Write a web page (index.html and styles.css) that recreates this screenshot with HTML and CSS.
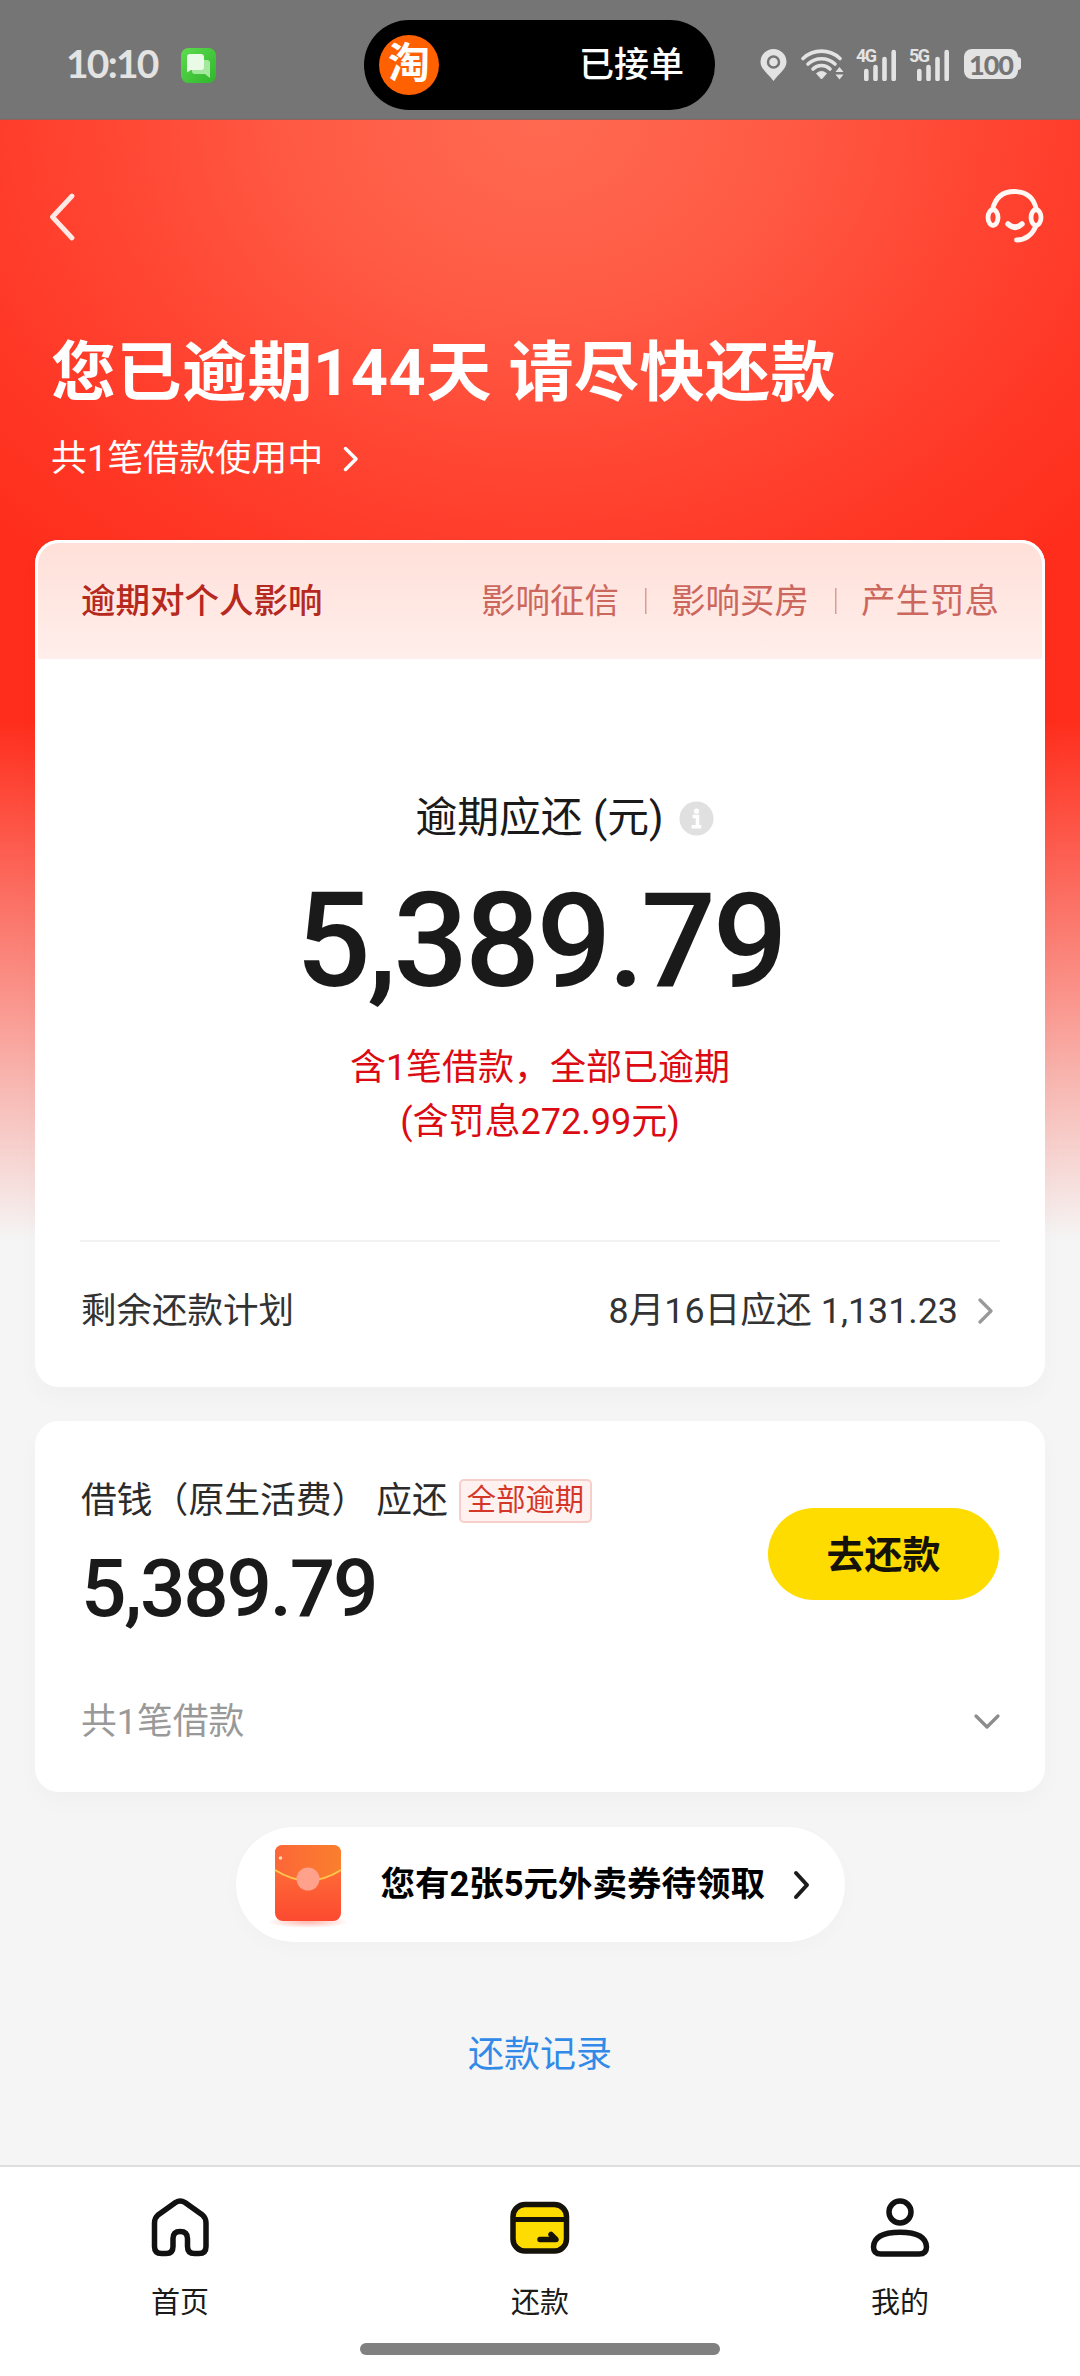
FILE: index.html
```html
<!DOCTYPE html>
<html lang="zh-CN">
<head>
<meta charset="utf-8">
<title>还款</title>
<link rel="stylesheet" href="styles.css">
</head>
<body>
<div class="screen">
  <header class="status">
    <div class="status-left">
      <span class="clock">10:10</span>
      <svg class="msg" viewBox="0 0 35 35"><defs><linearGradient id="mg" x1="0" y1="0" x2="1" y2="1"><stop offset="0" stop-color="#5ddc4e"/><stop offset="1" stop-color="#2fb52c"/></linearGradient></defs><rect width="35" height="35" rx="7.500" fill="url(#mg)"/><path d="M14 12h12q3 0 3 3v15l-5-4H14q-3 0-3-3v-8q0-3 3-3z" fill="#a4e89d"/><path d="M9 6h11q3 0 3 3v10q0 3-3 3H10l-4 2.500V9q0-3 3-3z" fill="#e9fbe7"/></svg>
    </div>
    <div class="island"><span class="tao">淘</span><span class="island-text">已接单</span></div>
    <div class="status-right">
      <svg class="pin" viewBox="0 0 26 32"><path d="M13 0a13 13 0 0 1 13 13c0 7-8 12-13 19C8 25 0 20 0 13A13 13 0 0 1 13 0z" fill="#e3e3e3"/><circle cx="13" cy="13" r="5.500" fill="none" stroke="#757575" stroke-width="2.500"/></svg>
      <svg class="wifi" viewBox="0 0 43 32"><g fill="none" stroke="#e3e3e3" stroke-width="3.600" stroke-linecap="round"><path d="M2 10.500a27 27 0 0 1 37 0"/><path d="M7 16a20 20 0 0 1 27 0"/><path d="M12 21a12 12 0 0 1 17 0"/></g><path d="M15.500 25.500q5-4 10 0L20.500 31z" fill="#e3e3e3" stroke="#e3e3e3" stroke-linejoin="round"/><path d="M34.500 24l4-5 4 5zM34.500 26.500h8l-4 5z" fill="#e3e3e3"/></svg>
      <div class="signal"><span class="gen">4G</span><svg viewBox="0 0 42 32"><path d="M10.300 22v8M19.500 18v12M28.500 10v20M37.700 3v27" stroke="#e3e3e3" stroke-width="4.600" stroke-linecap="round" fill="none"/></svg></div>
      <div class="signal second"><span class="gen">5G</span><svg viewBox="0 0 42 32"><path d="M10.300 22v8M19.500 18v12M28.500 10v20M37.700 3v27" stroke="#e3e3e3" stroke-width="4.600" stroke-linecap="round" fill="none"/></svg></div>
      <div class="battery"><span>100</span></div>
    </div>
  </header>

  <main class="content">
    <nav class="topnav">
      <svg class="back" viewBox="0 0 28 50"><path d="M24 5L4.500 26 24 47" fill="none" stroke="#ffe9e4" stroke-width="4.800" stroke-linecap="round" stroke-linejoin="round"/></svg>
      <svg class="headset" viewBox="0 0 60 56"><g fill="none" stroke="#fff7f4" stroke-width="4.800" stroke-linecap="round"><path d="M8.500 22C11 9.500 19 3.500 30.500 3.500S50 9.500 52.500 22"/><ellipse cx="9" cy="29.500" rx="5" ry="7.800"/><ellipse cx="52" cy="29.500" rx="5" ry="7.800"/><path d="M52 38C48 47 41 52 32.500 52"/><path d="M24 36q7 6.500 14 0" stroke-width="5.500"/></g></svg>
    </nav>
    <section class="hero">
      <h1>您已逾期144天 请尽快还款</h1>
      <p class="usage">共1笔借款使用中<svg viewBox="0 0 16 28"><path d="M2.500 3.500L13 14 2.500 24.500" fill="none" stroke="#fff" stroke-width="3.500" stroke-linecap="round" stroke-linejoin="round"/></svg></p>
    </section>

    <section class="card overdue">
      <div class="impact">
        <span class="impact-title">逾期对个人影响</span>
        <ul class="impact-list"><li>影响征信</li><li>影响买房</li><li>产生罚息</li></ul>
      </div>
      <div class="due-label"><span>逾期应还 (元)</span><svg class="info" viewBox="0 0 36 36"><circle cx="18" cy="18" r="17.500" fill="#e0e0e0"/><circle cx="18" cy="10.500" r="2.700" fill="#fff"/><path d="M14 16h5v10M13 26.500h10" stroke="#fff" stroke-width="3.600" fill="none"/></svg></div>
      <div class="amount">5,389.79</div>
      <p class="note">含1笔借款，全部已逾期<br>(含罚息272.99元)</p>
      <div class="plan">
        <span>剩余还款计划</span>
        <span class="plan-next">8月16日应还 1,131.23<svg viewBox="0 0 16 28"><path d="M2 3l11 11L2 25" fill="none" stroke="#999" stroke-width="3.200" stroke-linecap="round" stroke-linejoin="round"/></svg></span>
      </div>
    </section>

    <section class="card loan">
      <div class="loan-main">
        <div>
          <div class="loan-title"><span>借钱（原生活费） 应还</span><span class="tag">全部逾期</span></div>
          <div class="loan-amount">5,389.79</div>
        </div>
        <button class="pay">去还款</button>
      </div>
      <div class="loan-more"><span>共1笔借款</span><svg viewBox="0 0 28 18"><path d="M3 3l11 11L25 3" fill="none" stroke="#8c8c8c" stroke-width="3.200" stroke-linecap="round" stroke-linejoin="round"/></svg></div>
    </section>

    <div class="coupon">
      <svg class="envelope" viewBox="0 0 82 86"><defs><linearGradient id="eg" x1="0" y1="0" x2="0" y2="1"><stop offset="0" stop-color="#ff7a3a"/><stop offset="1" stop-color="#fc4a30"/></linearGradient><linearGradient id="fg" x1="0" y1="0" x2="1" y2="0"><stop offset="0" stop-color="#fc6638"/><stop offset="1" stop-color="#fa7f2e"/></linearGradient><radialGradient id="sh"><stop offset="0" stop-color="#ffb8ae"/><stop offset="1" stop-color="#ffb8ae" stop-opacity="0"/></radialGradient></defs><ellipse cx="41" cy="79" rx="41" ry="6" fill="url(#sh)"/><rect x="8" y="2" width="66" height="76" rx="8" fill="url(#eg)"/><path d="M16 2h50q8 0 8 8v17Q41 48 8 27V10q0-8 8-8z" fill="url(#fg)"/><path d="M8 27Q41 48 74 27" fill="none" stroke="#ffc84c" stroke-width="2"/><circle cx="41" cy="36" r="11.500" fill="#ffa18b"/><circle cx="13.500" cy="15" r="1.800" fill="#ffd9bb"/></svg>
      <span>您有2张5元外卖券待领取</span>
      <svg class="arrow" viewBox="0 0 18 30"><path d="M3 3l11 12L3 27" fill="none" stroke="#1c1c1c" stroke-width="4" stroke-linecap="round" stroke-linejoin="round"/></svg>
    </div>
    <a class="records">还款记录</a>
  </main>

  <footer class="tabbar">
    <div class="tab"><svg viewBox="0 0 80 80"><path d="M35.500 17.500L18 30Q14.500 33 14.500 38V61.500Q14.500 68.500 21.500 68.500H26Q33 68.500 33 61.500V53.500Q33 46.500 40.200 46.500T47.500 53.500V61.500Q47.500 68.500 54.500 68.500H59Q66 68.500 66 61.500V38Q66 33 62.500 30L45 17.500Q40.200 14.500 35.500 17.500z" fill="none" stroke="#111" stroke-width="5.500" stroke-linejoin="round"/></svg><span>首页</span></div>
    <div class="tab"><svg viewBox="0 0 80 80"><rect x="13" y="19.500" width="53.500" height="46.500" rx="12" fill="#ffdc00" stroke="#15120a" stroke-width="5.500"/><path d="M13 34.500h54" stroke="#15120a" stroke-width="5"/><path d="M40 54.500h16l-5-5" fill="none" stroke="#15120a" stroke-width="5.500" stroke-linecap="round" stroke-linejoin="round"/></svg><span>还款</span></div>
    <div class="tab"><svg viewBox="0 0 80 80"><g fill="none" stroke="#111" stroke-width="5.500"><circle cx="40" cy="27" r="11"/><path d="M21 69Q13.500 69 13.500 62C14 51 26 47.300 40 47.300S66 51 66.500 62Q66.500 69 59 69z"/></g></svg><span>我的</span></div>
    <i class="home-bar"></i>
  </footer>
</div>
</body>
</html>
```
FILE: styles.css
```css
* { box-sizing: border-box; margin: 0; padding: 0; }
body { background: #f5f5f5; font-family: Roboto, "Noto Sans CJK SC", sans-serif; color: #1a1a1a; }
svg { display: block; flex: none; }
.screen {
  width: 1080px; height: 2376px; display: flex; flex-direction: column; overflow: hidden;
  background:
    linear-gradient(to bottom, rgba(245,245,245,0) 720px, rgba(245,245,245,.5) 990px, #f5f5f5 1240px),
    radial-gradient(ellipse 760px 600px at 540px 120px, #ff6a51 0%, #ff5a44 32%, #ff4734 56%, #ff3725 80%, #ff2d1b 100%);
}

.status { flex: none; height: 120px; background: linear-gradient(#757575 119px, #96605b 119px); display: grid; grid-template-columns: 364px 351px 365px; padding-top: 20px; }
.status-left { display: flex; align-items: center; padding-left: 66px; height: 90px; color: #e3e3e3; }
.clock { width: 115px; font: 700 39px/1 Lato, sans-serif; letter-spacing: -1.800px; margin-top: -4px; }
.msg { width: 35px; height: 35px; }
.island { height: 90px; border-radius: 45px; background: #000; display: flex; align-items: center; justify-content: space-between; padding: 0 31px 0 15px; color: #fff; }
.tao { width: 60px; height: 60px; border-radius: 50%; background: #ff6000; text-align: center; font-weight: 700; font-size: 42px; line-height: 57px; }
.island-text { font-size: 35px; font-weight: 500; line-height: 1; margin-top: 0; }
.status-right { display: flex; align-items: center; padding-left: 45px; height: 90px; }
.pin { width: 27px; height: 32px; }
.wifi { width: 43px; height: 32px; margin-left: 14px; margin-top: -2px; }
.signal { position: relative; width: 42px; height: 32px; margin-left: 12px; }
.signal.second { margin-left: 11px; }
.gen { position: absolute; left: 0; top: -2px; font: 700 18px/18px Roboto, sans-serif; letter-spacing: -1.500px; color: #e3e3e3; }
.battery { width: 54px; height: 30px; margin-left: 13px; margin-top: -2px; border-radius: 8px; background: #e3e3e3; color: #757575; font: 900 27px/31px Lato, sans-serif; letter-spacing: -1px; text-align: center; position: relative; }
.battery::after { content: ""; position: absolute; right: -3px; top: 8px; width: 4px; height: 13px; border-radius: 0 3px 3px 0; background: #e3e3e3; }

.content { flex: 1; display: flex; flex-direction: column; align-items: center; }
.topnav { width: 100%; display: flex; justify-content: space-between; align-items: center; padding: 64px 36px 0 48px; height: 128px; }
.back { width: 28px; height: 50px; }
.headset { width: 60px; height: 56px; }
.hero { width: 100%; padding: 73px 51px 0; height: 292px; color: #fff; }
h1 { font-size: 65px; font-weight: 700; line-height: 104px; letter-spacing: .500px; white-space: nowrap; }
.usage { display: flex; align-items: center; font-size: 36px; line-height: 54px; margin-top: 7px; }
.usage svg { width: 16px; height: 28px; margin-left: 20px; }

.card { width: 1010px; background: #fff; border-radius: 24px; box-shadow: 0 10px 24px rgba(0,0,0,.025); }
.overdue { height: 847px; display: flex; flex-direction: column; align-items: center; }
.impact { width: 100%; height: 119px; display: flex; justify-content: space-between; align-items: center; padding: 0 43px 0 43px; border: 3px solid #fff; border-bottom: 0; border-radius: 24px 24px 0 0; background: linear-gradient(#ffe0d9, #ffeeeb); font-size: 34.500px; line-height: 50px; }
.impact-title { color: #b62920; font-weight: 500; }
.impact-list { display: flex; list-style: none; color: #cc675e; }
.impact-list li + li { margin-left: 26px; padding-left: 26px; background: linear-gradient(#dc9b94, #dc9b94) no-repeat 0 12px / 1.500px 26px; }
.due-label { display: flex; align-items: center; margin-top: 128px; padding-left: 49px; font-size: 41.800px; line-height: 62px; gap: 15px; }
.info { width: 35px; height: 35px; }
.amount { font-weight: 500; font-size: 132px; line-height: 156px; letter-spacing: -3.500px; margin-top: 14px; }
.note { text-align: center; color: #dc0a12; font-size: 36px; line-height: 54px; margin-top: 22px; }
.plan { width: 920px; margin-top: auto; height: 147px; border-top: 2px solid #f2f2f2; display: flex; justify-content: space-between; padding: 42px 6px 0 1px; font-size: 35.500px; line-height: 54px; color: #333; }
.plan-next { display: flex; align-items: center; height: 54px; font-size: 35.800px; }
.plan-next svg { width: 16px; height: 28px; margin-left: 20px; }

.loan { margin-top: 34px; height: 371px; padding: 0 46px; }
.loan-main { display: flex; justify-content: space-between; align-items: flex-start; padding-top: 53px; height: 256px; }
.loan-title { display: flex; align-items: center; font-size: 35.800px; line-height: 54px; color: #2b2b2b; }
.tag { margin-left: 11px; height: 44px; padding: 0 6px; border: 2px solid #f6cfcb; border-radius: 5px; background: #fff1ef; color: #d43627; font-size: 29.300px; line-height: 39px; }
.loan-amount { font-weight: 500; font-size: 80px; line-height: 94px; letter-spacing: -2.200px; margin-top: 14px; }
.pay { width: 231px; height: 92px; margin-top: 34px; border: 0; border-radius: 46px; background: #ffdc00; color: #15120a; font: 700 38px/88px "Noto Sans CJK SC", sans-serif; padding-bottom: 4px; }
.loan-more { display: flex; justify-content: space-between; align-items: center; font-size: 35.800px; line-height: 54px; color: #999; margin-top: 18px; }
.loan-more svg { width: 28px; height: 18px; margin-right: -2px; }

.coupon { width: 609px; height: 115px; margin-top: 35px; border-radius: 58px; background: #fff; box-shadow: 0 6px 20px rgba(0,0,0,.02); display: flex; align-items: center; padding-left: 31px; font-weight: 700; font-size: 34.500px; color: #000; white-space: nowrap; }
.coupon span { padding-bottom: 7px; }
.envelope { width: 82px; height: 86px; margin: 3px 32px 0 0; }
.arrow { width: 18px; height: 30px; margin-left: 28px; }
.records { margin-top: 86px; font-size: 36px; line-height: 54px; color: #328ae8; }

.tabbar { position: relative; height: 211px; flex: none; background: #fff; border-top: 2px solid #dedede; display: grid; grid-template-columns: repeat(3, 360px); }
.tab { display: flex; flex-direction: column; align-items: center; padding-top: 18px; font-size: 29px; line-height: 44px; }
.tab svg { width: 80px; height: 80px; }
.tab span { margin-top: 16px; }
.home-bar { position: absolute; left: 360px; bottom: 21px; width: 360px; height: 12px; border-radius: 6px; background: #808080; }
```
